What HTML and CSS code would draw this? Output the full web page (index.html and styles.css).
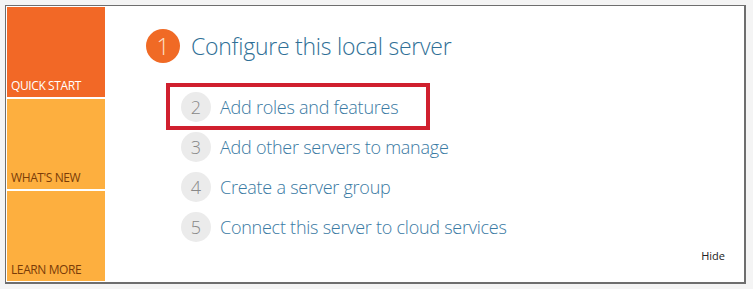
FILE: index.html
```html
<!DOCTYPE html>
<html>
<head>
<meta charset="utf-8">
<link rel="stylesheet" href="styles.css">
</head>
<body>
<div class="frame">
  <div class="sidebar">
    <div class="tile tile-quick">QUICK START</div>
    <div class="tile tile-new">WHAT'S NEW</div>
    <div class="tile tile-learn">LEARN MORE</div>
  </div>
  <div class="main">
    <div class="heading">
      <span class="num num-main">1</span>
      <span class="heading-text">Configure this local server</span>
    </div>
    <div class="steps">
      <div class="step step-hl"><span class="num">2</span><span class="step-text">Add roles and features</span></div>
      <div class="step"><span class="num">3</span><span class="step-text">Add other servers to manage</span></div>
      <div class="step"><span class="num">4</span><span class="step-text">Create a server group</span></div>
      <div class="step"><span class="num">5</span><span class="step-text">Connect this server to cloud services</span></div>
    </div>
    <div class="hide">Hide</div>
  </div>
</div>
</body>
</html>
```
FILE: styles.css
```css
html, body {
  margin: 0;
  padding: 0;
  background: #f4f4f4;
}
body {
  padding: 5px 7px 5px 5px;
  font-family: "Open Sans", "Noto Sans", sans-serif;
}
.frame {
  display: flex;
  width: 741px;
  height: 279px;
  border: 1px solid #6e6e6e;
  border-right-width: 2px;
  border-bottom-width: 2px;
  background: #fff;
  padding: 1px;
  box-sizing: border-box;
}
.sidebar {
  width: 98px;
  display: flex;
  flex-direction: column;
  gap: 2px;
}
.tile {
  flex: 1;
  display: flex;
  align-items: flex-end;
  padding: 0 0 4px 4px;
  font-size: 12px;
  letter-spacing: -0.4px;
  line-height: 14px;
}
.tile-quick {
  background: #f26826;
  color: #fff;
  padding-bottom: 4px;
}
.tile-new, .tile-learn {
  background: #fdaf3f;
  color: #7a3c08;
}
.main {
  flex: 1;
  position: relative;
  padding: 22px 0 0 41px;
}
.heading {
  display: flex;
  align-items: center;
  gap: 11px;
  height: 34px;
}
.num {
  display: inline-flex;
  align-items: center;
  justify-content: center;
  width: 30px;
  height: 30px;
  border-radius: 50%;
  background: #ebebeb;
  color: #888;
  font-size: 18px;
  font-weight: 300;
  flex-shrink: 0;
}
.num-main {
  width: 34px;
  height: 34px;
  background: #f06a25;
  color: #fde0cc;
  font-size: 23px;
}
.heading-text {
  color: #2f6f96;
  font-size: 23px;
  font-weight: 300;
  letter-spacing: -0.25px;
}
.steps {
  display: flex;
  flex-direction: column;
  gap: 10px;
  margin-top: 29px;
  margin-left: 35px;
}
.step {
  display: flex;
  align-items: center;
  gap: 9px;
  height: 30px;
}
.step-text {
  color: #3a7aa3;
  font-size: 18px;
  font-weight: 300;
  letter-spacing: -0.25px;
}
.step-hl {
  position: relative;
}
.step-hl::after {
  content: "";
  position: absolute;
  left: -15px;
  top: -9px;
  width: 264px;
  height: 47px;
  border: 4px solid #d0202e;
  box-sizing: border-box;
}
.hide {
  position: absolute;
  right: 18px;
  bottom: 18px;
  font-size: 11px;
  color: #222;
}
```
